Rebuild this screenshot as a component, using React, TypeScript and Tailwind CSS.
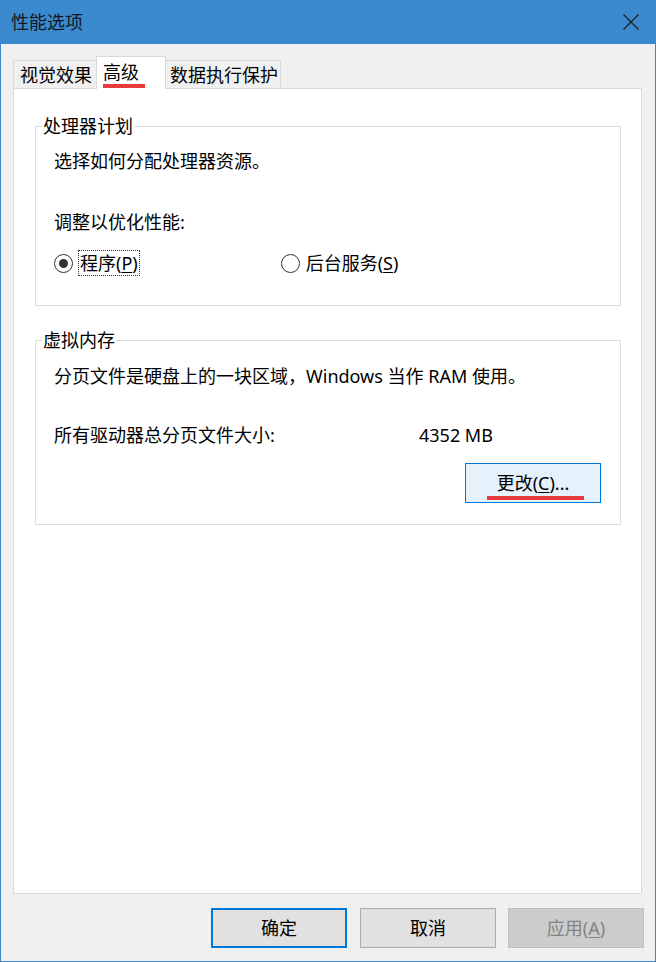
import React from "react";

const font = { fontFamily: '"Noto Sans", "Noto Sans CJK SC", sans-serif' };

function Radio({ checked }: { checked: boolean }) {
  return (
    <span className="w-[19px] h-[19px] rounded-full border border-[#333333] bg-white flex items-center justify-center shrink-0">
      {checked && <span className="w-[9px] h-[9px] rounded-full bg-[#333333]" />}
    </span>
  );
}

export default function App() {
  return (
    <div
      className="w-[656px] h-[962px] flex flex-col bg-[#f0f0f0] border border-t-0 border-[#3b8ad0] text-[18px] text-black overflow-hidden"
      style={font}
    >
      {/* Title bar */}
      <div className="h-[44px] bg-[#3b8ad0] flex items-center justify-between pl-[11px] pr-[16px] shrink-0 -mx-px">
        <span className="text-[18px] leading-[24px] text-[#101820]">性能选项</span>
        <svg width="16" height="16" viewBox="0 0 16 16" className="mr-[1px]">
          <path d="M0.5 0.5 L15.5 15.5 M15.5 0.5 L0.5 15.5" stroke="#1a1a1a" strokeWidth="1.1" fill="none" />
        </svg>
      </div>

      {/* Tabs */}
      <div className="flex items-end h-[44px] pl-[12px] shrink-0">
        <div className="h-[28px] w-[83px] border border-b-0 border-r-0 border-[#d9d9d9] bg-[#f0f0f0] pl-[6px] flex items-center leading-[20px]">
          视觉效果
        </div>
        <div className="relative z-10 h-[33px] w-[70px] -mb-px border border-b-0 border-[#d9d9d9] bg-white pl-[6px] pt-[5px] leading-[20px]">
          高级
          <span className="absolute left-[6px] top-[27px] w-[42px] h-[4px] bg-[#e83c3c]" />
        </div>
        <div className="h-[28px] w-[115px] border border-b-0 border-l-0 border-[#d9d9d9] bg-[#f0f0f0] pl-[4px] flex items-center leading-[20px]">
          数据执行保护
        </div>
      </div>

      {/* Panel */}
      <div className="ml-[12px] w-[629px] h-[806px] border border-[#d9d9d9] bg-white shrink-0 pt-[27px] pl-[21px] pr-[20px]">
        <fieldset className="border border-[#dcdcdc]">
          <legend className="ml-[6px] px-[1px] leading-[20px]">处理器计划</legend>
          <div className="pl-[18px] pb-[29px]">
            <div className="mt-[15px] leading-[20px]">选择如何分配处理器资源。</div>
            <div className="mt-[41px] leading-[20px]">调整以优化性能:</div>
            <div className="mt-[18px] h-[26px] flex items-center">
              <Radio checked />
              <span className="ml-[5px] h-[26px] px-[1px] flex items-center border border-dotted border-[#333333] leading-[20px]">
                程序(<span className="underline underline-offset-2">P</span>)
              </span>
              <span className="ml-[141px]">
                <Radio checked={false} />
              </span>
              <span className="ml-[6px] leading-[20px]">
                后台服务(<span className="underline underline-offset-2">S</span>)
              </span>
            </div>
          </div>
        </fieldset>

        <fieldset className="mt-[24px] border border-[#dcdcdc]">
          <legend className="ml-[6px] px-[1px] leading-[20px]">虚拟内存</legend>
          <div className="pl-[18px] pr-[19px] pb-[21px]">
            <div className="mt-[16px] leading-[20px]">分页文件是硬盘上的一块区域，Windows 当作 RAM 使用。</div>
            <div className="mt-[39px] flex leading-[20px]">
              <span className="w-[365px]">所有驱动器总分页文件大小:</span>
              <span>4352 MB</span>
            </div>
            <div className="mt-[18px] flex justify-end">
              <button className="relative w-[136px] h-[40px] border border-[#0078d7] bg-[#e5f1fb] leading-[20px] flex items-center justify-center">
                <span>
                  更改(<span className="underline underline-offset-2">C</span>)...
                </span>
                <span className="absolute left-[21px] top-[32px] w-[97px] h-[4px] bg-[#e83c3c]" />
              </button>
            </div>
          </div>
        </fieldset>
      </div>

      {/* Bottom buttons */}
      <div className="flex mt-[14px] pl-[210px]">
        <button className="w-[136px] h-[40px] border-2 border-[#0078d7] bg-[#e1e1e1] leading-[20px] flex items-center justify-center">
          确定
        </button>
        <button className="ml-[13px] w-[136px] h-[40px] border border-[#adadad] bg-[#e1e1e1] leading-[20px] flex items-center justify-center">
          取消
        </button>
        <button className="ml-[12px] w-[136px] h-[40px] border border-[#bfbfbf] bg-[#cccccc] text-[#838383] leading-[20px] flex items-center justify-center">
          <span>
            应用(<span className="underline underline-offset-2">A</span>)
          </span>
        </button>
      </div>
    </div>
  );
}
